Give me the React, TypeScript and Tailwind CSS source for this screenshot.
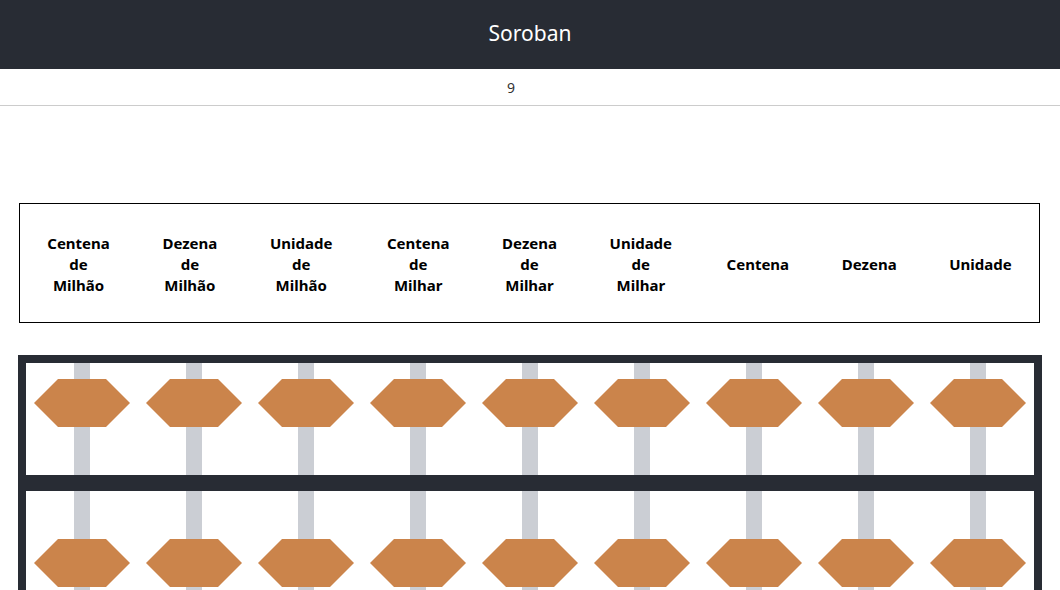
import React from "react";

const labels: string[][] = [
  ["Centena", "de", "Milhão"],
  ["Dezena", "de", "Milhão"],
  ["Unidade", "de", "Milhão"],
  ["Centena", "de", "Milhar"],
  ["Dezena", "de", "Milhar"],
  ["Unidade", "de", "Milhar"],
  ["Centena"],
  ["Dezena"],
  ["Unidade"],
];

function Bead() {
  return (
    <svg width="96" height="48" viewBox="0 0 96 48" className="block relative">
      <polygon points="24,0 72,0 96,24 72,48 24,48 0,24" fill="#cb844b" />
    </svg>
  );
}

export default function App() {
  return (
    <div className="min-h-[590px] bg-white" style={{ fontFamily: '"Noto Sans", "Open Sans", sans-serif' }}>
      <header className="h-[69px] bg-[#282c34] flex items-center justify-center pb-[2px]">
        <h1 className="text-white text-[21px] leading-none">Soroban</h1>
      </header>
      <div className="h-[37px] border-b border-[#cccccc] flex items-center justify-center pr-[38px] text-[14px] text-[#333]">
        9
      </div>
      <div className="px-[18px] pt-[97px]">
        <div className="ml-[1px] mr-[2px] border border-black h-[120px] flex items-center pt-[2px]">
          <table className="w-full border-collapse">
            <tbody>
              <tr>
                {labels.map((l, i) => (
                  <td key={i} className="text-center align-middle font-bold text-[15px] leading-[21px] text-black px-2">
                    {l.map((w, j) => (
                      <div key={j}>{w}</div>
                    ))}
                  </td>
                ))}
              </tr>
            </tbody>
          </table>
        </div>
        <div className="mt-[32px] border-[8px] border-[#282c34] w-[1024px]">
          <div className="flex h-[112px]">
            {labels.map((_, i) => (
              <div key={i} className="relative w-[112px] flex justify-center pt-[16px]">
                <div className="absolute top-0 bottom-0 left-[48px] w-[16px] bg-[#cbced4]" />
                <Bead />
              </div>
            ))}
          </div>
          <div className="h-[16px] bg-[#282c34]" />
          <div className="flex h-[300px]">
            {labels.map((_, i) => (
              <div key={i} className="relative w-[112px] flex flex-col items-center pt-[48px] gap-[4px]">
                <div className="absolute top-0 bottom-0 left-[48px] w-[16px] bg-[#cbced4]" />
                <Bead />
                <Bead />
                <Bead />
                <Bead />
              </div>
            ))}
          </div>
        </div>
      </div>
    </div>
  );
}
